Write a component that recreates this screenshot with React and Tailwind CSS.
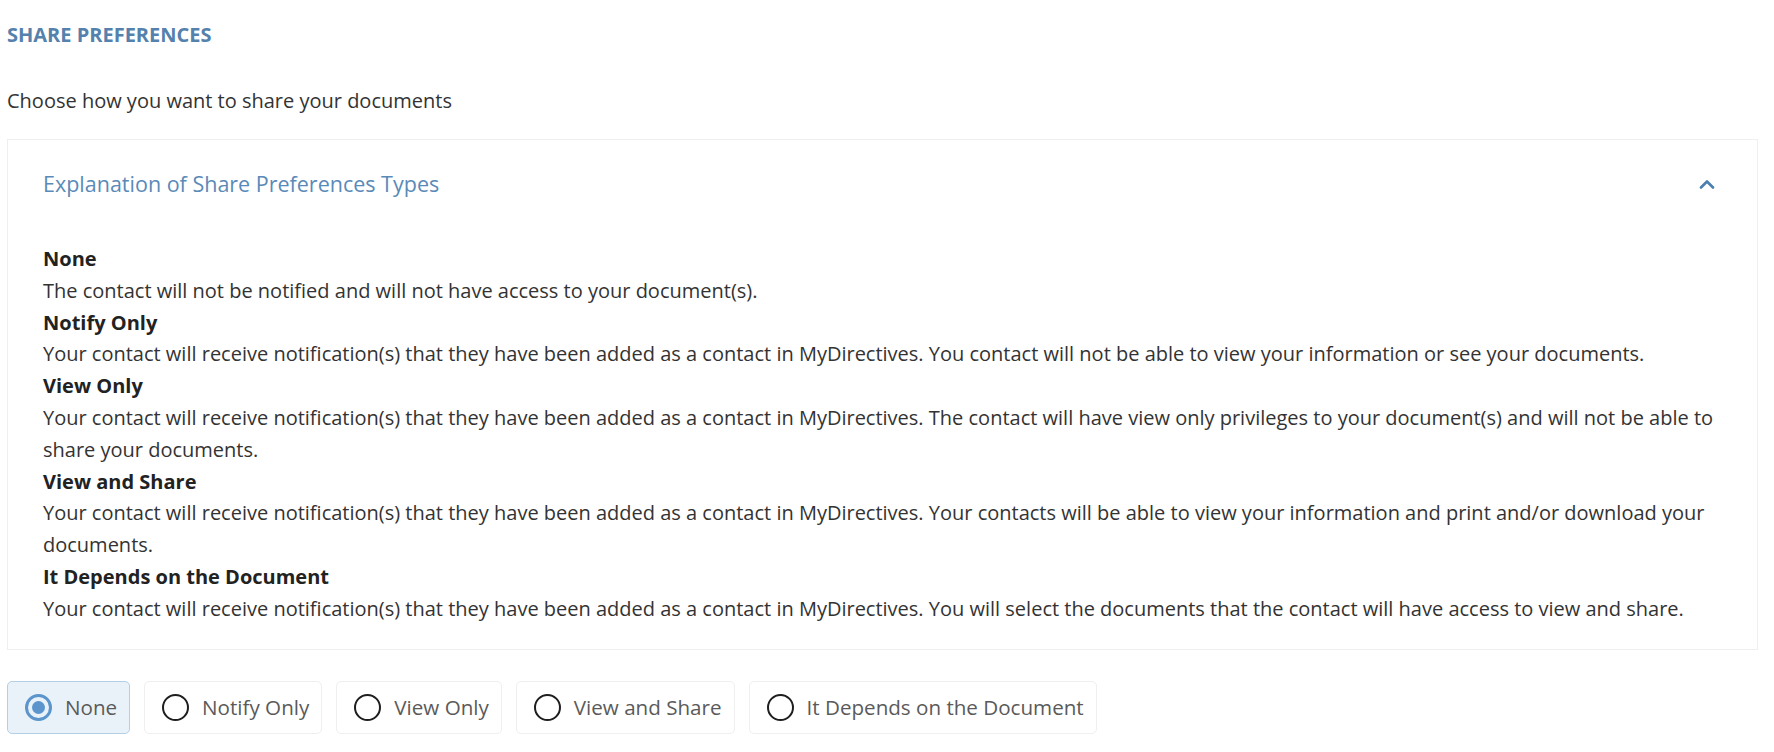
import React, { useState } from 'react';

const types = [
  {
    name: 'None',
    text: 'The contact will not be notified and will not have access to your document(s).',
  },
  {
    name: 'Notify Only',
    text: 'Your contact will receive notification(s) that they have been added as a contact in MyDirectives. You contact will not be able to view your information or see your documents.',
  },
  {
    name: 'View Only',
    text: 'Your contact will receive notification(s) that they have been added as a contact in MyDirectives. The contact will have view only privileges to your document(s) and will not be able to share your documents.',
  },
  {
    name: 'View and Share',
    text: 'Your contact will receive notification(s) that they have been added as a contact in MyDirectives. Your contacts will be able to view your information and print and/or download your documents.',
  },
  {
    name: 'It Depends on the Document',
    text: 'Your contact will receive notification(s) that they have been added as a contact in MyDirectives. You will select the documents that the contact will have access to view and share.',
  },
];

export default function App() {
  const [selected, setSelected] = useState('None');
  const [open, setOpen] = useState(true);

  return (
    <div className="min-h-screen bg-white pl-[7px] pr-[16px] pt-[22px] font-['Open_Sans',sans-serif]">
      <h2 className="text-[20px] font-bold leading-[26px] text-[#5581ad]">SHARE PREFERENCES</h2>

      <p className="mt-[40px] text-[20px] leading-[26px] text-[#333]">Choose how you want to share your documents</p>

      <div className="mt-[25px] border border-[#efefef] bg-white">
        <button
          type="button"
          onClick={() => setOpen(!open)}
          className="flex w-full items-center justify-between pl-[35px] pr-[42px] pt-[30px] text-left"
        >
          <span className="text-[21.5px] leading-[28px] text-[#5a8ab8]">Explanation of Share Preferences Types</span>
          <svg width="16" height="10" viewBox="0 0 16 10" fill="none" className={open ? '' : 'rotate-180'}>
            <path d="M2 8.5L8 2.5L14 8.5" stroke="#4a7fb0" strokeWidth="2.6" strokeLinecap="round" strokeLinejoin="round" />
          </svg>
        </button>

        {open && (
          <div className="pl-[35px] pr-[36px] pt-[45px] pb-[24px] text-[20px] leading-[31.8px] text-[#333]">
            {types.map((t) => (
              <div key={t.name}>
                <div className="font-bold text-[#222]">{t.name}</div>
                <div>{t.text}</div>
              </div>
            ))}
          </div>
        )}
      </div>

      <div className="mt-[31px] flex gap-[14px]">
        {types.map((t) => {
          const active = selected === t.name;
          return (
            <button
              key={t.name}
              type="button"
              onClick={() => setSelected(t.name)}
              className={
                active
                  ? 'flex h-[53px] items-center gap-[13px] rounded-[5px] border border-[#b3cfe6] bg-[#eaf2f9] pl-[17px] pr-[12px]'
                  : 'flex h-[53px] items-center gap-[13px] rounded-[5px] border border-[#efefef] bg-white pl-[17px] pr-[12px]'
              }
            >
              {active ? (
                <span className="flex h-[27px] w-[27px] items-center justify-center rounded-full border-[3px] border-[#5b95cc]">
                  <span className="h-[13px] w-[13px] rounded-full bg-[#5b95cc]" />
                </span>
              ) : (
                <span className="h-[27px] w-[27px] rounded-full border-[2.5px] border-[#1e1e1e]" />
              )}
              <span className="text-[20.6px] leading-[26px] text-[#5a5a5a]">{t.name}</span>
            </button>
          );
        })}
      </div>
    </div>
  );
}
